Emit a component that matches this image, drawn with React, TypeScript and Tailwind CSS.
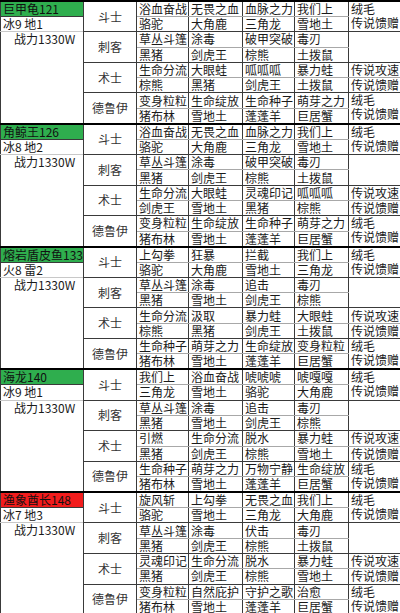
import React from "react";

type Band = {
  name: string;
  head: string;
  elem: string;
  rows: string[][];
};

const bands: Band[] = [
  {
    name: "巨甲龟121",
    head: "bg-[#2fae4e]",
    elem: "冰9 地1",
    rows: [
      ["浴血奋战", "无畏之血", "血脉之力", "我们上"],
      ["骆驼", "大角鹿", "三角龙", "雪地土"],
      ["草丛斗篷", "涂毒", "破甲突破", "毒刃"],
      ["黑猪", "剑虎王", "棕熊", "土拨鼠"],
      ["生命分流", "大眼蛙", "呱呱呱", "暴力蛙"],
      ["棕熊", "黑猪", "剑虎王", "土拨鼠"],
      ["变身粒粒", "生命绽放", "生命种子", "萌芽之力"],
      ["猪布林", "雪地土", "蓬蓬羊", "巨居蟹"],
    ],
  },
  {
    name: "角鲸王126",
    head: "bg-[#2fae4e]",
    elem: "冰8 地2",
    rows: [
      ["浴血奋战", "无畏之血", "血脉之力", "我们上"],
      ["骆驼", "大角鹿", "三角龙", "雪地土"],
      ["草丛斗篷", "涂毒", "破甲突破", "毒刃"],
      ["黑猪", "剑虎王", "棕熊", "土拨鼠"],
      ["生命分流", "大眼蛙", "灵魂印记", "呱呱呱"],
      ["剑虎王", "雪地土", "黑猪", "棕熊"],
      ["变身粒粒", "生命绽放", "生命种子", "萌芽之力"],
      ["猪布林", "雪地土", "蓬蓬羊", "巨居蟹"],
    ],
  },
  {
    name: "熔岩盾皮鱼133",
    head: "bg-[#2fae4e]",
    elem: "火8 雷2",
    rows: [
      ["上勾拳", "狂暴", "拦截", "我们上"],
      ["骆驼", "大角鹿", "雪地土", "三角龙"],
      ["草丛斗篷", "涂毒", "追击", "毒刃"],
      ["黑猪", "雪地土", "剑虎王", "棕熊"],
      ["生命分流", "汲取", "暴力蛙", "大眼蛙"],
      ["棕熊", "黑猪", "剑虎王", "土拨鼠"],
      ["生命种子", "萌芽之力", "生命绽放", "变身粒粒"],
      ["猪布林", "雪地土", "蓬蓬羊", "巨居蟹"],
    ],
  },
  {
    name: "海龙140",
    head: "bg-[#2fae4e]",
    elem: "冰9 地1",
    rows: [
      ["我们上", "浴血奋战", "唬唬唬", "唬嘎嘎"],
      ["三角龙", "雪地土", "骆驼", "大角鹿"],
      ["草丛斗篷", "涂毒", "追击", "毒刃"],
      ["黑猪", "雪地土", "剑虎王", "棕熊"],
      ["引燃", "生命分流", "脱水", "暴力蛙"],
      ["黑猪", "剑虎王", "棕熊", "雪地土"],
      ["生命种子", "萌芽之力", "万物宁静", "生命绽放"],
      ["猪布林", "雪地土", "蓬蓬羊", "巨居蟹"],
    ],
  },
  {
    name: "渔象酋长148",
    head: "bg-[#f21c1c]",
    elem: "冰7 地3",
    rows: [
      ["旋风斩", "上勾拳", "无畏之血", "我们上"],
      ["骆驼", "雪地土", "三角龙", "大角鹿"],
      ["草丛斗篷", "涂毒", "伏击", "毒刃"],
      ["黑猪", "剑虎王", "棕熊", "土拨鼠"],
      ["灵魂印记", "生命分流", "脱水", "暴力蛙"],
      ["黑猪", "剑虎王", "棕熊", "雪地土"],
      ["变身粒粒", "自然庇护", "守护之歌", "治愈"],
      ["猪布林", "雪地土", "蓬蓬羊", "巨居蟹"],
    ],
  },
];

const classes = ["斗士", "刺客", "术士", "德鲁伊"];

const base = "border border-[#3a3a3a] px-[2px] py-0 whitespace-nowrap align-middle";

// one line of text in a fixed-height box so rows keep their height
function T({ children }: { children: React.ReactNode }) {
  return <div className="h-[14px] leading-[14px]">{children}</div>;
}

function BandRows({ band }: { band: Band }) {
  return (
    <>
      {band.rows.map((row, i) => {
        const top = i === 0 ? " border-t-2 border-t-black" : "";
        const inner = i % 2 === 0 ? " border-b-[#a8a8a8]" : "";
        return (
          <tr key={i} className="h-[15.3px]">
            {i === 0 && (
              <td className={`${base}${top} ${band.head} text-[#111]`}>
                <T>{band.name}</T>
              </td>
            )}
            {i === 1 && (
              <td className={`${base} border-b-[#c8c8c8]`}>
                <T>{band.elem}</T>
              </td>
            )}
            {i === 2 && (
              <td rowSpan={6} className={`${base} align-top pl-[13px]`}>
                <T>战力1330W</T>
              </td>
            )}
            {i % 2 === 0 && (
              <td rowSpan={2} className={`${base}${top} text-center text-[#333]`}>
                <T>{classes[i / 2]}</T>
              </td>
            )}
            {row.map((s, j) => (
              <td key={j} className={`${base}${top}${inner}`}>
                <T>{s}</T>
              </td>
            ))}
            {(i === 0 || i === 6) && (
              <td rowSpan={2} className={`${base}${top} align-top`}>
                <T>绒毛</T>
                <T>传说馈赠</T>
              </td>
            )}
            {i === 2 && <td rowSpan={2} className={base}></td>}
            {i === 4 && (
              <td className={`${base} border-b-[#a8a8a8]`}>
                <T>传说攻速</T>
              </td>
            )}
            {i === 5 && (
              <td className={base}>
                <T>传说馈赠</T>
              </td>
            )}
          </tr>
        );
      })}
    </>
  );
}

export default function App() {
  return (
    <div className="w-[400px] h-[613px] overflow-hidden bg-white">
      <table
        className="table-fixed border-collapse w-[402px] text-[12px] leading-none text-[#1a1a1a]"
        style={{ fontFamily: '"Noto Sans CJK SC", "Noto Sans CJK JP", sans-serif' }}
      >
        <colgroup>
          <col className="w-[83px]" />
          <col className="w-[53px]" />
          <col className="w-[52px]" />
          <col className="w-[54px]" />
          <col className="w-[52px]" />
          <col className="w-[54px]" />
          <col className="w-[54px]" />
        </colgroup>
        <tbody>
          {bands.map((b, k) => (
            <BandRows key={k} band={b} />
          ))}
        </tbody>
      </table>
    </div>
  );
}
